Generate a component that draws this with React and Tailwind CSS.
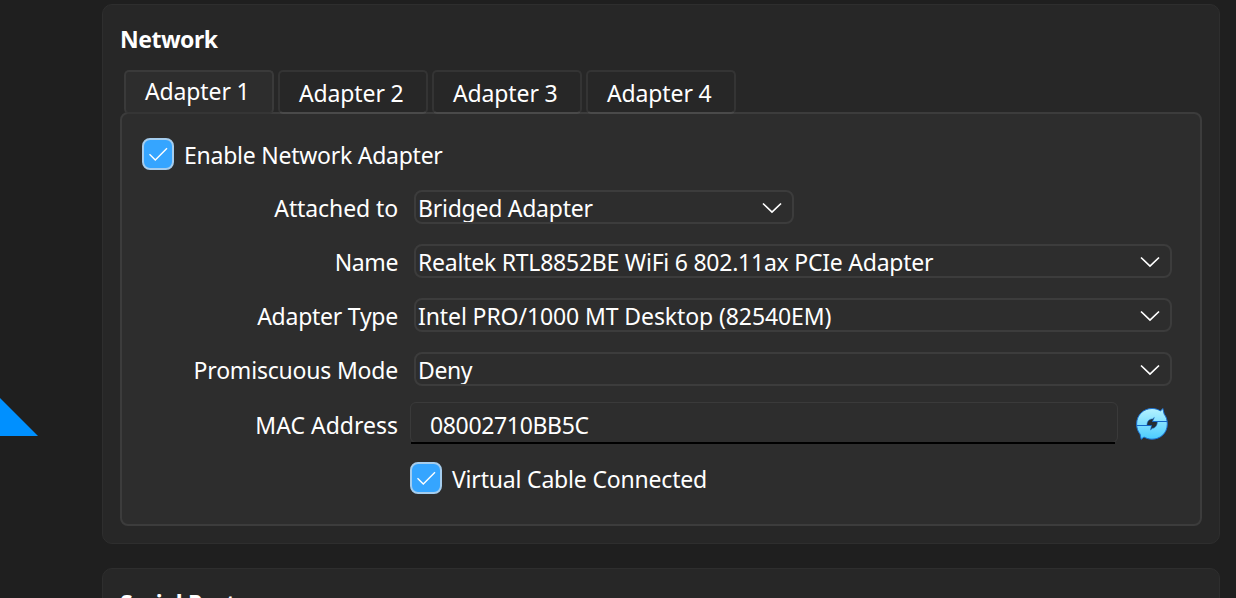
import React from "react";

function Tab({ text, active }) {
  return (
    <div
      className={
        "relative flex h-[44px] w-[150px] items-start rounded-[5px] border-2 pl-[19px] leading-[32px] tracking-[-0.13px] " +
        (active
          ? "border-[#3a3a3a] border-b-[#353535] bg-[#2d2d2d] pt-[3px]"
          : "border-[#343434] border-b-[#4a4a4a] bg-[#272727] pt-[5px]")
      }
    >
      {text}
    </div>
  );
}

function Check() {
  return (
    <div className="flex h-8 w-8 shrink-0 items-center justify-center rounded-[8px] border-2 border-[#a5cdee] bg-[#35a5ff]">
      <svg className="shrink-0" width="28" height="28" viewBox="0 0 28 28" fill="none" stroke="#fff" strokeWidth="1.4">
        <path d="M5.500 14.200 L11.300 20 L23 8.300" />
      </svg>
    </div>
  );
}

function Select({ text, className }) {
  return (
    <div
      className={
        "flex h-[34px] items-center justify-between overflow-hidden rounded-[8px] border-2 border-[#3c3c3c] pr-[10px] pl-[2px] leading-[32px] " +
        className
      }
    >
      <span className="relative top-px">{text}</span>
      <svg className="mt-[2px]" width="20" height="12" viewBox="0 0 20 12" fill="none" stroke="#fff" strokeWidth="1.7">
        <path d="M1 1.500 L10 10 L19 1.500" />
      </svg>
    </div>
  );
}

function Row({ name, nameClass, children }) {
  return (
    <div className="flex h-[54px] items-start">
      <div className={"w-[276px] shrink-0 pt-[2px] text-right leading-[32px] " + nameClass}>{name}</div>
      {children}
    </div>
  );
}

function Refresh() {
  return (
    <svg width="34" height="34" viewBox="0 0 34 34">
      <defs>
        <linearGradient id="g" x1="0" y1="0" x2="0" y2="1">
          <stop offset="0" stopColor="#b4f2ff" />
          <stop offset="1" stopColor="#4accff" />
        </linearGradient>
      </defs>
      <path
        d="M17 1.500 C20.500 1.500 23 2.500 25.500 4 L27.800 1.500 L29.200 7.200 C31.200 9.500 32.300 13 32.300 17 C32.300 26 25.500 32.200 17 32.200 C14 32.200 11.500 31.400 9 30 L6.200 32.300 L5 27 C2.800 24.500 1.600 21 1.600 17 C1.600 8 8.500 1.500 17 1.500 Z"
        fill="url(#g)"
        stroke="#1b6fd0"
        strokeWidth="1"
      />
      <path
        d="M12 18.500 C11.800 14.500 14 12 17.500 12 L19.300 10.500 L17.500 14.500 H22.300 C22.500 18.500 20 21.200 17.300 21.300 L15.500 23 L16.500 18.500 Z"
        fill="#252d32"
        stroke="#1b6fd0"
        strokeWidth=".6"
      />
      <path d="M1.500 18.500 H16.500 M17.500 14.500 H32" stroke="#1266c8" strokeWidth="1" />
    </svg>
  );
}

export default function App() {
  return (
    <div className="relative h-[598px] w-[1236px] overflow-hidden bg-[#1f1f1f] pt-1 pl-[102px] font-['Noto_Sans',sans-serif] text-[23px] whitespace-nowrap text-white">
      <svg className="absolute top-[398px] left-0" width="39" height="38" viewBox="0 0 39 38">
        <path d="M0 0 L38 38 H0 Z" fill="#0090ff" />
      </svg>

      <section className="h-[540px] w-[1118px] rounded-[10px] border border-[#2e2e2e] bg-[#272727] px-[17px] pt-[18px]">
        <h2 className="h-[47px] leading-[32px] font-bold tracking-[-0.5px]">Network</h2>
        <div className="flex gap-1 pl-1">
          <Tab text="Adapter 1" active />
          <Tab text="Adapter 2" />
          <Tab text="Adapter 3" />
          <Tab text="Adapter 4" />
        </div>
        <div className="-mt-[2px] h-[414px] w-[1082px] rounded-[8px] border-2 border-[#3c3c3c] bg-[#2d2d2d]">
          <div className="flex items-center gap-[10px] pt-6 pl-5">
            <Check />
            <span className="relative top-px leading-[32px] tracking-[-0.25px]">Enable Network Adapter</span>
          </div>
          <div className="pt-5">
            <Row name="Attached to" nameClass="tracking-[-0.1px]">
              <Select text="Bridged Adapter" className="ml-4 w-[380px] tracking-[-0.25px]" />
            </Row>
            <Row name="Name" nameClass="tracking-[-0.4px]">
              <Select
                text="Realtek RTL8852BE WiFi 6 802.11ax PCIe Adapter"
                className="ml-4 w-[758px] tracking-[-0.24px]"
              />
            </Row>
            <Row name="Adapter Type" nameClass="tracking-[-0.25px]">
              <Select text="Intel PRO/1000 MT Desktop (82540EM)" className="ml-4 w-[758px] tracking-[-0.1px]" />
            </Row>
            <Row name="Promiscuous Mode" nameClass="tracking-[-0.2px]">
              <Select text="Deny" className="ml-4 w-[758px] tracking-[-0.4px]" />
            </Row>
          </div>
          <div className="-mt-[4px] flex h-[42px]">
            <div className="w-[276px] shrink-0 pt-[7px] text-right leading-[32px]">MAC Address</div>
            <div className="ml-3 w-[708px]">
              <div className="h-[41px] rounded-[6px] border border-[#3a3a3a] pt-[6px] pl-[19px] leading-[32px] tracking-[-0.35px]">
                08002710BB5C
              </div>
              <div className="relative -mt-px mr-[3px] ml-px h-[2px] bg-black" />
            </div>
            <div className="ml-4 pt-[5px] pl-px">
              <Refresh />
            </div>
          </div>
          <div className="mt-[18px] ml-[288px] flex items-center gap-[10px]">
            <Check />
            <span className="relative top-px leading-[32px] tracking-[-0.19px]">Virtual Cable Connected</span>
          </div>
        </div>
      </section>

      <section className="mt-6 h-[120px] w-[1118px] rounded-[10px] border border-[#2e2e2e] bg-[#272727] px-[17px] pt-[18px]">
        <h2 className="leading-[32px] font-bold tracking-[-0.3px]">Serial Ports</h2>
      </section>
    </div>
  );
}
